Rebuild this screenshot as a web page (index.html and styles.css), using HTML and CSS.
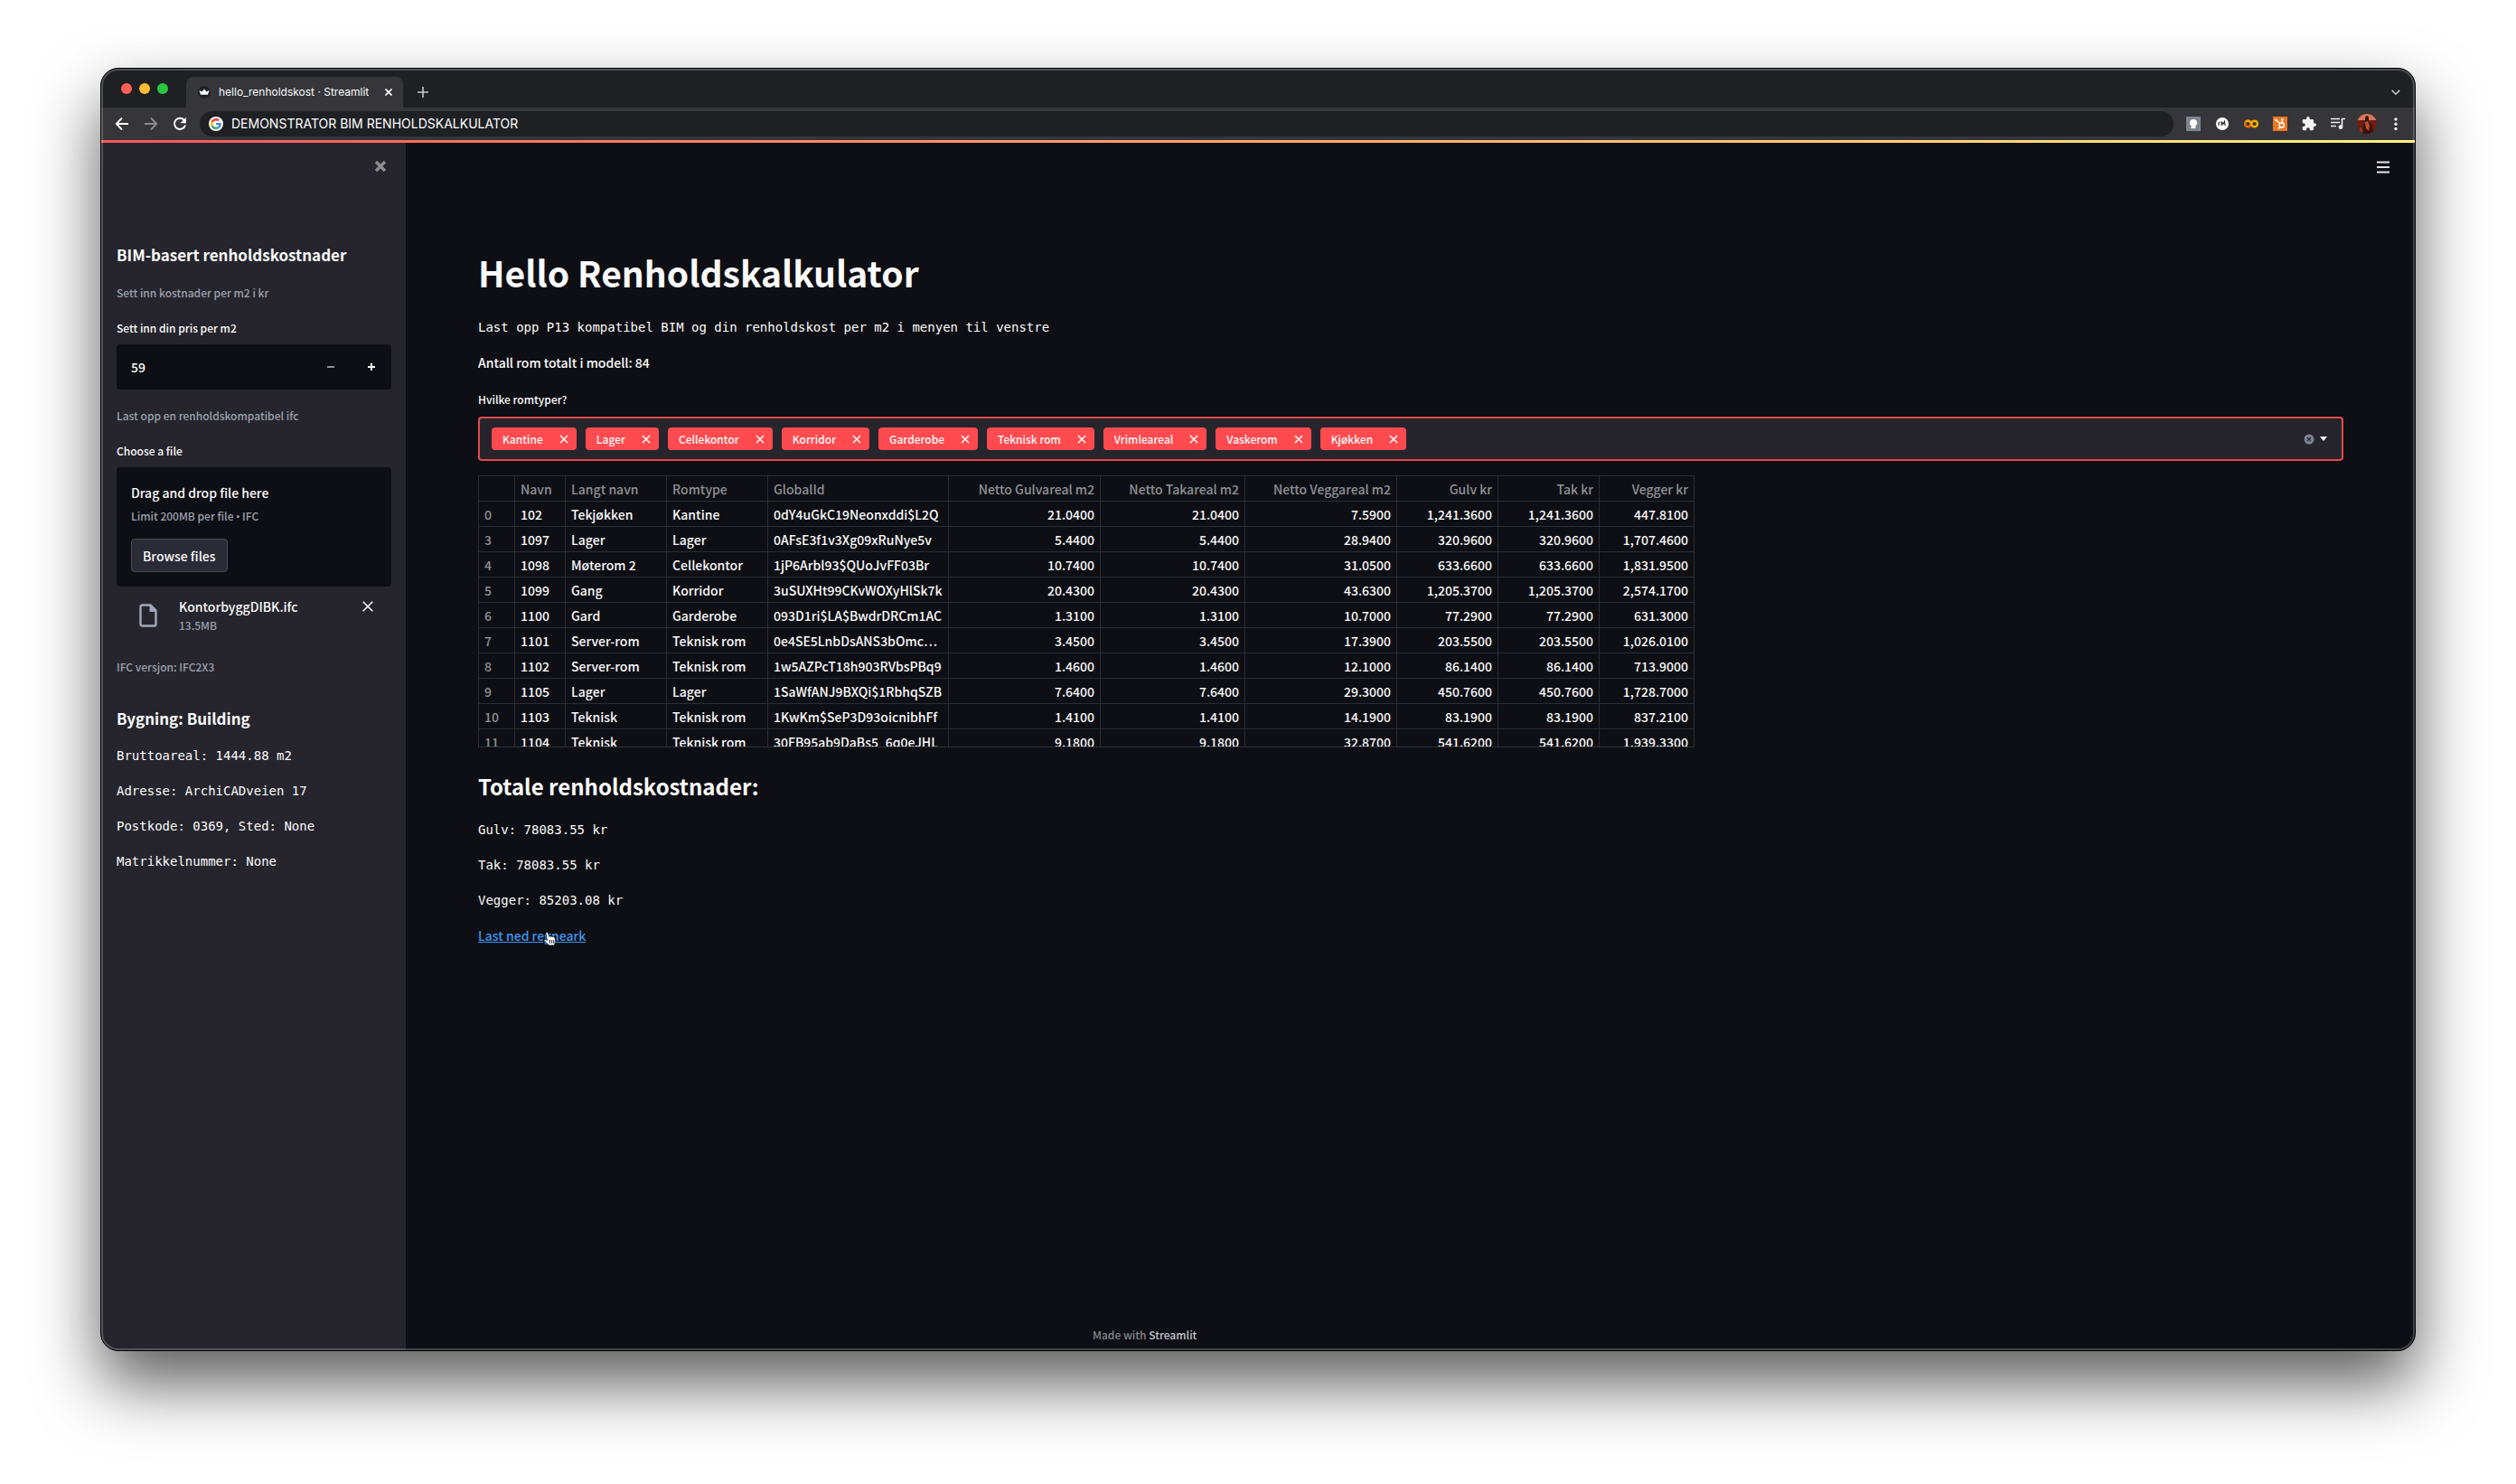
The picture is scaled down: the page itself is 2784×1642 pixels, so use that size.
FILE: index.html
```html
<!DOCTYPE html>
<html lang="no">
<head>
<meta charset="utf-8">
<title>hello_renholdskost · Streamlit</title>
<link rel="stylesheet" href="styles.css">
</head>
<body>
<div class="window">
  <header class="tabstrip">
    <div class="lights"><span class="light red"></span><span class="light amber"></span><span class="light green"></span></div>
    <div class="tab">
      <svg class="favicon" viewBox="0 0 14 14" width="14" height="14"><circle cx="7" cy="7" r="7" fill="#20222a"/><path d="M1.500 5l3 1.400L7 3.600l2.500 2.800 3-1.400-1.500 4.800h-8z" fill="#fff"/></svg>
      <span class="tab-title">hello_renholdskost · Streamlit</span>
      <button class="icon" aria-label="Close tab"><svg viewBox="0 0 8 8" width="8" height="8"><path d="M.5.5l7 7M7.500.5l-7 7" stroke="#fff" stroke-width="1.600"/></svg></button>
    </div>
    <button class="icon" aria-label="New tab"><svg viewBox="0 0 12 12" width="12" height="12"><path d="M6 0v12M0 6h12" stroke="#c5c7ca" stroke-width="1.600"/></svg></button>
    <button class="icon tab-search" aria-label="Search tabs"><svg viewBox="0 0 10 7" width="10" height="7"><path d="M.7.9L5 5.200 9.300.9" fill="none" stroke="#c5c7ca" stroke-width="1.600"/></svg></button>
  </header>

  <nav class="toolbar">
    <div class="nav-buttons">
      <button class="icon" aria-label="Back"><svg viewBox="0 0 16 16" width="16" height="16"><path d="M15 8H2M8 1.500L1.800 8 8 14.500" fill="none" stroke="#fff" stroke-width="1.900"/></svg></button>
      <button class="icon" aria-label="Forward"><svg viewBox="0 0 16 16" width="16" height="16"><path d="M1 8h13M8 1.500L14.200 8 8 14.500" fill="none" stroke="#8a8b8f" stroke-width="1.900"/></svg></button>
      <button class="icon" aria-label="Reload"><svg viewBox="0 0 16 16" width="16" height="16"><path d="M13.300 4.600A6.100 6.100 0 1 0 14 9.500" fill="none" stroke="#fff" stroke-width="1.900"/><path d="M14.900.8v6.400H8.500z" fill="#fff"/></svg></button>
    </div>
    <div class="omnibox">
      <svg viewBox="0 0 48 48" width="16" height="16"><circle cx="24" cy="24" r="24" fill="#fff"/><g transform="translate(6 6) scale(.75)"><path fill="#EA4335" d="M24 9.500c3.540 0 6.710 1.220 9.210 3.600l6.850-6.850C35.900 2.380 30.470 0 24 0 14.620 0 6.510 5.380 2.560 13.220l7.980 6.190C12.430 13.720 17.740 9.500 24 9.500z"/><path fill="#4285F4" d="M46.980 24.550c0-1.570-.15-3.090-.38-4.550H24v9.020h12.940c-.58 2.960-2.260 5.480-4.780 7.180l7.730 6c4.510-4.180 7.090-10.360 7.090-17.650z"/><path fill="#FBBC05" d="M10.530 28.590c-.48-1.450-.76-2.990-.76-4.590s.27-3.140.76-4.590l-7.980-6.190C.92 16.460 0 20.120 0 24c0 3.880.92 7.540 2.560 10.780l7.970-6.190z"/><path fill="#34A853" d="M24 48c6.480 0 11.930-2.130 15.890-5.810l-7.730-6c-2.150 1.450-4.920 2.300-8.160 2.300-6.260 0-11.570-4.220-13.470-9.910l-7.980 6.190C6.510 42.620 14.620 48 24 48z"/></g></svg>
      <input class="address" type="text" aria-label="Address" value="DEMONSTRATOR BIM RENHOLDSKALKULATOR">
    </div>
    <div class="extensions">
      <svg viewBox="0 0 16 16"><rect width="16" height="16" fill="#7d868c"/><circle cx="8" cy="7" r="4" fill="#fff"/><rect x="5.500" y="11" width="5" height="2" fill="#fff"/></svg>
      <svg viewBox="0 0 16 16"><circle cx="8" cy="8" r="7" fill="#fff"/><path d="M4 10V7.200q.1-1.200 1.600-1M7.200 10V5.600l1.600 3 1.700-3.300.6 4.700" fill="none" stroke="#222" stroke-width="1.100"/></svg>
      <svg viewBox="0 0 16 16" fill="none" stroke-width="2.400"><circle cx="4.400" cy="8" r="3.300" stroke="#e8710a"/><circle cx="11.600" cy="8" r="3.300" stroke="#f9ab00"/><path d="M7.500 6.800A3.300 3.300 0 0 0 2.200 5.500" stroke="#f9ab00"/></svg>
      <svg viewBox="0 0 16 16"><rect width="16" height="16" fill="#f0761f"/><g fill="none" stroke="#fff" stroke-width="1.500"><circle cx="9.800" cy="9.600" r="2.600"/><path d="M10.300 7V3.200M8 7.800L3.400 3.800M8 11.500l-2.200 2"/></g><circle cx="10.300" cy="3.200" r="1.200" fill="#fff"/><circle cx="3.400" cy="3.800" r="1.200" fill="#fff"/></svg>
      <svg viewBox="1 1 22 22"><path fill="#f1f1f2" d="M20.500 11H19V7c0-1.100-.9-2-2-2h-4V3.500a2.500 2.500 0 0 0-5 0V5H4c-1.100 0-2 .9-2 2v3.800h1.500a2.700 2.700 0 0 1 0 5.400H2V20c0 1.100.9 2 2 2h3.800v-1.500a2.700 2.700 0 0 1 5.400 0V22H17c1.100 0 2-.9 2-2v-4h1.500a2.500 2.500 0 0 0 0-5z"/></svg>
      <svg viewBox="0 0 16 16"><path d="M0 2.500h10M0 6.500h10M0 10.500h6" stroke="#eee" stroke-width="1.500"/><path d="M12.500 11.500V2.500H16" fill="none" stroke="#eee" stroke-width="1.700"/><circle cx="11" cy="11.700" r="2.400" fill="#eee"/></svg>
      <svg class="avatar" viewBox="0 0 22 22"><defs><clipPath id="face"><circle cx="11" cy="11" r="11"/></clipPath></defs><g clip-path="url(#face)"><rect width="22" height="22" fill="#6b1f12"/><path d="M0 0h22v7H0z" fill="#d9775a"/><path d="M6 22l1-10 2-2V4q2-4 4 0v5l4 3 1 10z" fill="#3a120c"/><path d="M9 9l3-1 2 5-1 6-3-3z" fill="#c0502c"/><path d="M4 14l3 6H2z" fill="#b3301a"/></g></svg>
      <svg viewBox="0 0 16 16" fill="#eee"><circle cx="8" cy="3" r="1.700"/><circle cx="8" cy="8.300" r="1.700"/><circle cx="8" cy="13.500" r="1.700"/></svg>
    </div>
  </nav>
  <div class="decoration"></div>

  <div class="app">
    <aside class="sidebar">
      <button class="icon sidebar-close" aria-label="Close sidebar"><svg viewBox="0 0 14 14" width="14" height="14"><path d="M2 2l10 10M12 2L2 12" stroke="#8b8b90" stroke-width="3.400"/></svg></button>
      <h2 class="side-title">BIM-basert renholdskostnader</h2>
      <p class="caption">Sett inn kostnader per m2 i kr</p>
      <label class="label" for="price">Sett inn din pris per m2</label>
      <div class="number">
        <input id="price" class="number-input" type="text" inputmode="numeric" value="59">
        <button class="icon step" aria-label="Decrease"><svg viewBox="0 0 8 8" width="8" height="8"><path d="M0 4h8" stroke="#8b8d98" stroke-width="2"/></svg></button>
        <button class="icon step" aria-label="Increase"><svg viewBox="0 0 8 8" width="8" height="8"><path d="M0 4h8M4 0v8" stroke="#fff" stroke-width="2"/></svg></button>
      </div>
      <p class="caption">Last opp en renholdskompatibel ifc</p>
      <span class="label" id="file-label">Choose a file</span>
      <section class="dropzone" aria-labelledby="file-label">
        <span class="drop-title">Drag and drop file here</span>
        <small class="drop-hint">Limit 200MB per file <span class="dot">•</span> IFC</small>
        <button class="browse">Browse files</button>
      </section>
      <div class="file">
        <svg class="file-icon" viewBox="0 0 20 26" width="20" height="26"><path d="M1.500 3.500a2 2 0 0 1 2-2h9l6 6v15a2 2 0 0 1-2 2h-13a2 2 0 0 1-2-2z" fill="none" stroke="#a3a8b8" stroke-width="2.400"/><path d="M11.500 1.500v7.500h7.500z" fill="#a3a8b8"/></svg>
        <div class="file-text"><span class="file-name">KontorbyggDIBK.ifc</span><small class="file-size">13.5MB</small></div>
        <button class="icon file-remove" aria-label="Remove file"><svg viewBox="0 0 12 12" width="12" height="12"><path d="M.7.7l10.600 10.600M11.300.7L.7 11.300" stroke="#f5f5f5" stroke-width="1.600"/></svg></button>
      </div>
      <p class="caption">IFC versjon: IFC2X3</p>
      <h2 class="side-title building">Bygning: Building</h2>
      <pre class="mono">Bruttoareal: 1444.88 m2</pre>
      <pre class="mono">Adresse: ArchiCADveien 17</pre>
      <pre class="mono">Postkode: 0369, Sted: None</pre>
      <pre class="mono">Matrikkelnummer: None</pre>
    </aside>

    <main class="main">
      <button class="icon menu" aria-label="Menu"><svg viewBox="0 0 14 14" width="14" height="14"><path d="M0 1.500h14M0 7h14M0 12.500h14" stroke="#e6e6e8" stroke-width="2.200"/></svg></button>
      <h1 class="title">Hello Renholdskalkulator</h1>
      <pre class="mono">Last opp P13 kompatibel BIM og din renholdskost per m2 i menyen til venstre</pre>
      <p class="text">Antall rom totalt i modell: 84</p>
      <span class="label" id="types-label">Hvilke romtyper?</span>
      <div class="multiselect" role="group" aria-labelledby="types-label">
        <span class="tag">Kantine<button class="icon" aria-label="Remove"><svg viewBox="0 0 10 10"><path d="M1 1l8 8M9 1L1 9"/></svg></button></span>
        <span class="tag">Lager<button class="icon" aria-label="Remove"><svg viewBox="0 0 10 10"><path d="M1 1l8 8M9 1L1 9"/></svg></button></span>
        <span class="tag">Cellekontor<button class="icon" aria-label="Remove"><svg viewBox="0 0 10 10"><path d="M1 1l8 8M9 1L1 9"/></svg></button></span>
        <span class="tag">Korridor<button class="icon" aria-label="Remove"><svg viewBox="0 0 10 10"><path d="M1 1l8 8M9 1L1 9"/></svg></button></span>
        <span class="tag">Garderobe<button class="icon" aria-label="Remove"><svg viewBox="0 0 10 10"><path d="M1 1l8 8M9 1L1 9"/></svg></button></span>
        <span class="tag">Teknisk rom<button class="icon" aria-label="Remove"><svg viewBox="0 0 10 10"><path d="M1 1l8 8M9 1L1 9"/></svg></button></span>
        <span class="tag">Vrimleareal<button class="icon" aria-label="Remove"><svg viewBox="0 0 10 10"><path d="M1 1l8 8M9 1L1 9"/></svg></button></span>
        <span class="tag">Vaskerom<button class="icon" aria-label="Remove"><svg viewBox="0 0 10 10"><path d="M1 1l8 8M9 1L1 9"/></svg></button></span>
        <span class="tag">Kjøkken<button class="icon" aria-label="Remove"><svg viewBox="0 0 10 10"><path d="M1 1l8 8M9 1L1 9"/></svg></button></span>
        <div class="select-actions">
          <button class="icon" aria-label="Clear all"><svg viewBox="0 0 12 12" width="12" height="12"><circle cx="6" cy="6" r="5.500" fill="#7f8296"/><path d="M4 4l4 4M8 4L4 8" stroke="#262730" stroke-width="1.200"/></svg></button>
          <button class="icon" aria-label="Open"><svg viewBox="0 0 8 5" width="8" height="5"><path d="M0 0h8L4 5z" fill="#fff"/></svg></button>
        </div>
      </div>

      <div class="table-frame">
        <table class="table">
          <colgroup><col class="c-index"><col class="c-name"><col class="c-mid"><col class="c-mid"><col class="c-id"><col class="c-wide"><col class="c-area"><col class="c-wide"><col class="c-mid"><col class="c-mid"><col class="c-last"></colgroup>
          <thead><tr><th></th><th>Navn</th><th>Langt navn</th><th>Romtype</th><th>GlobalId</th><th>Netto Gulvareal m2</th><th>Netto Takareal m2</th><th>Netto Veggareal m2</th><th>Gulv kr</th><th>Tak kr</th><th>Vegger kr</th></tr></thead>
          <tbody>
            <tr><th>0</th><td>102</td><td>Tekjøkken</td><td>Kantine</td><td>0dY4uGkC19Neonxddi$L2Q</td><td>21.0400</td><td>21.0400</td><td>7.5900</td><td>1,241.3600</td><td>1,241.3600</td><td>447.8100</td></tr>
            <tr><th>3</th><td>1097</td><td>Lager</td><td>Lager</td><td>0AFsE3f1v3Xg09xRuNye5v</td><td>5.4400</td><td>5.4400</td><td>28.9400</td><td>320.9600</td><td>320.9600</td><td>1,707.4600</td></tr>
            <tr><th>4</th><td>1098</td><td>Møterom 2</td><td>Cellekontor</td><td>1jP6Arbl93$QUoJvFF03Br</td><td>10.7400</td><td>10.7400</td><td>31.0500</td><td>633.6600</td><td>633.6600</td><td>1,831.9500</td></tr>
            <tr><th>5</th><td>1099</td><td>Gang</td><td>Korridor</td><td>3uSUXHt99CKvWOXyHlSk7k</td><td>20.4300</td><td>20.4300</td><td>43.6300</td><td>1,205.3700</td><td>1,205.3700</td><td>2,574.1700</td></tr>
            <tr><th>6</th><td>1100</td><td>Gard</td><td>Garderobe</td><td>093D1ri$LA$BwdrDRCm1AC</td><td>1.3100</td><td>1.3100</td><td>10.7000</td><td>77.2900</td><td>77.2900</td><td>631.3000</td></tr>
            <tr><th>7</th><td>1101</td><td>Server-rom</td><td>Teknisk rom</td><td>0e4SE5LnbDsANS3bOmc…</td><td>3.4500</td><td>3.4500</td><td>17.3900</td><td>203.5500</td><td>203.5500</td><td>1,026.0100</td></tr>
            <tr><th>8</th><td>1102</td><td>Server-rom</td><td>Teknisk rom</td><td>1w5AZPcT18h903RVbsPBq9</td><td>1.4600</td><td>1.4600</td><td>12.1000</td><td>86.1400</td><td>86.1400</td><td>713.9000</td></tr>
            <tr><th>9</th><td>1105</td><td>Lager</td><td>Lager</td><td>1SaWfANJ9BXQi$1RbhqSZB</td><td>7.6400</td><td>7.6400</td><td>29.3000</td><td>450.7600</td><td>450.7600</td><td>1,728.7000</td></tr>
            <tr><th>10</th><td>1103</td><td>Teknisk</td><td>Teknisk rom</td><td>1KwKm$SeP3D93oicnibhFf</td><td>1.4100</td><td>1.4100</td><td>14.1900</td><td>83.1900</td><td>83.1900</td><td>837.2100</td></tr>
            <tr><th>11</th><td>1104</td><td>Teknisk</td><td>Teknisk rom</td><td>30FB95ab9DaBs5_6q0eJHL</td><td>9.1800</td><td>9.1800</td><td>32.8700</td><td>541.6200</td><td>541.6200</td><td>1,939.3300</td></tr>
          </tbody>
        </table>
      </div>

      <h2 class="totals">Totale renholdskostnader:</h2>
      <pre class="mono">Gulv: 78083.55 kr</pre>
      <pre class="mono">Tak: 78083.55 kr</pre>
      <pre class="mono">Vegger: 85203.08 kr</pre>
      <p class="text download"><a class="link" href="#">Last ned regneark</a>
        <svg class="cursor" viewBox="0 0 16 18" width="16" height="18"><path d="M4.500 10.500L3 3.200q-.2-1.700 1-1.900 1.100-.1 1.500 1.400l1 3.600q1.200-.9 2.200 0 1.300-.8 2.200.3 1.800-.4 2.200 1.200l.8 3.700-1.600 4.500H6.600L1.200 11Q.5 9.300 2.200 9.200z" fill="#fff" stroke="#111" stroke-width=".8"/><path d="M7.500 10v3.800M9.700 10v3.800M11.700 10v3.800" stroke="#111" stroke-width=".9"/></svg></p>
      <footer class="footer">Made with <a class="footer-link" href="#">Streamlit</a></footer>
    </main>
  </div>
</div>
</body>
</html>
```

FILE: styles.css
```css
* { box-sizing: border-box; }

body {
  margin: 0;
  min-height: 100vh;
  padding: 75px 111px 147px;
  display: flex;
  background: #fff;
  color: #fafafa;
  font: 500 14px/24px "Noto Sans CJK SC", sans-serif;
}

h1, h2, p, pre { margin: 0; }

.icon {
  display: flex;
  align-items: center;
  justify-content: center;
  padding: 0;
  border: 0;
  background: none;
  color: inherit;
}

.window {
  position: relative;
  flex: 1;
  display: flex;
  flex-direction: column;
  border: 1px solid #000;
  border-radius: 20px;
  overflow: hidden;
  background: #0e0f14;
  box-shadow: 0 36px 72px rgba(0, 0, 0, .64);
}

/* Thin highlight along the window edge */
.window::after {
  content: "";
  position: absolute;
  inset: 0;
  border: 2px solid rgba(255, 255, 255, .22);
  border-radius: 19px;
  pointer-events: none;
}

/* Browser chrome */
.tabstrip {
  display: flex;
  align-items: center;
  height: 43px;
  padding: 9px 16px 0 22px;
  background: #1e2024;
}

.lights { display: flex; gap: 8px; margin-bottom: 9px; }
.light { width: 12px; height: 12px; border-radius: 50%; }
.red { background: #ff5f57; }
.amber { background: #febc2e; }
.green { background: #28c840; }

.tab {
  display: flex;
  align-items: center;
  gap: 9px;
  width: 240px;
  height: 34px;
  margin: 0 16px 0 20px;
  padding: 0 12px 0 13px;
  border-radius: 8px 8px 0 0;
  background: #35353a;
  font: 400 12px/16px Inter, sans-serif;
}

.tab-title { flex: 1; white-space: nowrap; }
.tab-search { margin-left: auto; }

.toolbar {
  display: flex;
  align-items: center;
  gap: 14px;
  height: 36px;
  padding: 0 13px 0 15px;
  background: #35353a;
}

.nav-buttons { display: flex; gap: 16px; }

.omnibox {
  display: flex;
  flex: 1;
  align-items: center;
  gap: 9px;
  height: 28px;
  padding-left: 10px;
  border-radius: 14px;
  background: #1e2024;
}

.address {
  flex: 1;
  padding: 0;
  border: 0;
  background: none;
  color: #fff;
  font: 400 14px/20px Inter, sans-serif;
}

.extensions { display: flex; align-items: center; gap: 16px; }
.extensions svg { width: 16px; height: 16px; }
.extensions .avatar { width: 22px; height: 22px; margin: 0 -3px; }

.decoration { height: 3px; background: linear-gradient(90deg, #f5595a, #fff080); }

/* App */
.app { display: flex; flex: 1; }

.sidebar {
  display: flex;
  flex-direction: column;
  width: 337px;
  padding: 19px 16px 16px 17px;
  background: #26252d;
}

.sidebar-close { align-self: flex-end; margin-right: 5px; }

.side-title { margin: 79px 0 19px; font-size: 17px; line-height: 24px; }
.side-title.building { margin: 17px 0; }

.caption { margin-bottom: 18px; color: #9ca0ac; font-size: 12px; line-height: 21px; }
.label { margin-bottom: 8px; font-size: 12px; line-height: 21px; }

.number {
  display: flex;
  height: 50px;
  margin-bottom: 18px;
  border-radius: 4px;
  background: #0e0f14;
}

.number-input {
  flex: 1;
  min-width: 0;
  padding: 0 16px;
  border: 0;
  background: none;
  color: inherit;
  font: inherit;
}

.step { width: 45px; }

.dropzone {
  display: flex;
  flex-direction: column;
  align-items: flex-start;
  padding: 16px;
  border-radius: 4px;
  background: #0e0f14;
}

.drop-hint, .file-size { color: #9ca0ac; font-size: 12px; line-height: 20px; }
.drop-hint { margin: 4px 0 14px; }
.dot { font-family: Roboto, sans-serif; }

.browse {
  height: 37px;
  padding: 0 12px;
  border: 1px solid #4a4b55;
  border-radius: 4px;
  background: #2b2b36;
  color: inherit;
  font: inherit;
}

.file { display: flex; align-items: center; margin: 11px 0 25px; padding: 0 20px 0 25px; }
.file-text { display: flex; flex: 1; flex-direction: column; margin-left: 24px; }
.file-name { line-height: 22px; }
.file-remove { align-self: flex-start; height: 22px; }

.mono { margin-bottom: 15px; font: 400 14px/24px "DejaVu Sans Mono", monospace; }

.main {
  display: flex;
  flex: 1;
  flex-direction: column;
  min-width: 0;
  padding: 20px 79px 5px 80px;
}

.menu { align-self: flex-end; margin-right: -51px; }
.title { margin: 81px 0 21px; font-size: 39px; line-height: 56px; }
.text { margin-bottom: 18px; }

.multiselect {
  display: flex;
  align-items: center;
  gap: 10px;
  height: 49px;
  margin-top: 1px;
  padding: 0 16px 0 13px;
  border: 2px solid #e6484e;
  border-radius: 4px;
  background: #26252d;
}

.tag {
  display: flex;
  align-items: center;
  gap: 18px;
  height: 25px;
  padding: 0 9px 0 12px;
  border-radius: 4px;
  background: #ff4b4f;
  font-size: 12px;
}

.tag svg { width: 10px; height: 10px; stroke: #fff; stroke-width: 1.5; }
.select-actions { display: flex; align-items: center; gap: 6px; margin-left: auto; }

.table-frame {
  align-self: flex-start;
  height: 301px;
  margin: 16px 0 27px;
  overflow: hidden;
  border-bottom: 1px solid #2e3036;
}

.table { width: 1346px; table-layout: fixed; border-collapse: collapse; }
.table tr { height: 28px; }
.table th, .table td {
  padding: 2px 6px 0;
  border: 1px solid #2b2d33;
  font-weight: inherit;
  line-height: 25px;
  text-align: left;
  white-space: nowrap;
}
.table th { color: #909196; }
.table tr > :nth-child(n+6) { text-align: right; }
.c-index { width: 40px; }
.c-name { width: 56px; }
.c-mid { width: 112px; }
.c-id { width: 200px; }
.c-wide { width: 168px; }
.c-area { width: 160px; }
.c-last { width: 105px; }

.totals { margin-bottom: 20px; font-size: 24px; line-height: 32px; }
.download { position: relative; }
.link { color: #3d96f0; text-decoration: underline; }
.cursor { position: absolute; left: 72px; top: 7px; }

.footer {
  margin-top: auto;
  padding-left: 680px;
  color: #85868b;
  font-size: 12px;
}
.footer-link { color: #c4c5c8; text-decoration: none; }
```
